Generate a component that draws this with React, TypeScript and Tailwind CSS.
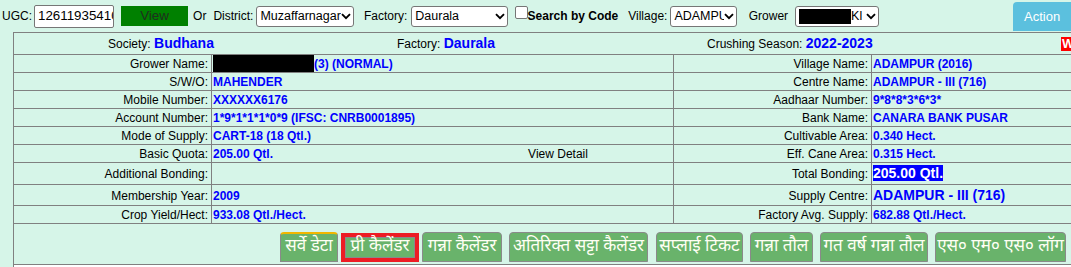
import React from "react";

const Chevron = () => (
  <svg width="10" height="7" viewBox="0 0 10 7" className="shrink-0">
    <path d="M1 1.2 L5 5.2 L9 1.2" fill="none" stroke="#000" strokeWidth="1.9" />
  </svg>
);

function FakeSelect({ w, ml, children }: { w: string; ml: string; children: React.ReactNode }) {
  return (
    <div
      className={`${w} ${ml} h-[21px] flex items-center justify-between border border-[#767676] rounded-[3px] bg-white pl-[3px] pr-[2px] text-[12.5px] text-black overflow-hidden whitespace-nowrap`}
    >
      <div className="min-w-0 overflow-hidden flex items-center">{children}</div>
      <Chevron />
    </div>
  );
}

const lbl = "border border-[#808080] text-right pr-[3px] pt-[2px] pb-[1px] text-[12px] leading-[14px] text-black whitespace-nowrap";
const val = "border border-[#808080] text-left pl-[1px] pt-[2px] pb-[1px] text-[12px] leading-[14px] font-bold text-[#0000ff] whitespace-nowrap";

const btn = "h-[30px] flex items-center justify-center border border-[#8a8a8a] rounded-t-[4px] bg-[#69b36b] text-[#fffff4] text-[17px] leading-none whitespace-nowrap";

export default function App() {
  return (
    <div className="w-[1071px] h-[267px] overflow-hidden bg-[#d6f5e8] font-['Liberation_Sans',Arial,sans-serif]">
      {/* Top filter bar */}
      <div className="h-[32px] flex items-center text-[12px] text-black whitespace-nowrap">
        <span className="ml-[2px]">UGC:</span>
        <div className="ml-[2px] w-[82px] h-[23px] flex items-center border border-[#767676] rounded-[2px] bg-white pl-[3px] text-[13.33px] overflow-hidden">
          12611935410
        </div>
        <div className="ml-[7px] w-[69px] h-[20px] flex items-center justify-center bg-[#008000] text-[13.33px] text-[#1f2f1f]">
          View
        </div>
        <span className="ml-[5px]">Or</span>
        <span className="ml-[7px]">District:</span>
        <FakeSelect w="w-[100px]" ml="ml-[3px]">Muzaffarnagar</FakeSelect>
        <span className="ml-[10px]">Factory:</span>
        <FakeSelect w="w-[99px]" ml="ml-[4px]">Daurala</FakeSelect>
        <div className="ml-[7px] self-start mt-[6px] w-[13px] h-[13px] border border-[#767676] rounded-[2px] bg-white" />
        <span className="font-bold">Search by Code</span>
        <span className="ml-[10px]">Village:</span>
        <FakeSelect w="w-[68px]" ml="ml-[3px]">ADAMPUR</FakeSelect>
        <span className="ml-[12px]">Grower</span>
        <FakeSelect w="w-[86px]" ml="ml-[7px]">
          <span className="inline-block shrink-0 w-[52px] h-[15px] bg-black" />
          <span>Kl</span>
        </FakeSelect>
        <div className="ml-[134px] self-start mt-[2px] w-[58px] h-[29px] shrink-0 flex items-center pl-[11px] bg-[#5bc0de] rounded-tl-[4px] text-white text-[13px]">
          Action
        </div>
      </div>

      {/* Main table */}
      <div className="ml-[13px] w-[1120px]">
        <table className="border-collapse table-fixed w-[1120px]">
          <colgroup>
            <col className="w-[198px]" />
            <col className="w-[462px]" />
            <col className="w-[198px]" />
            <col className="w-[262px]" />
          </colgroup>
          <tbody>
            <tr>
              <td colSpan={4} className="border border-[#808080] pt-[2px] pb-[1px] text-[12px] leading-[17px] text-black whitespace-nowrap">
                <div className="flex items-center">
                  <div className="w-[383px] pl-[94px]">
                    Society: <span className="text-[14px] font-bold text-[#0000ff]">Budhana</span>
                  </div>
                  <div className="w-[310px]">
                    Factory: <span className="text-[14px] font-bold text-[#0000ff]">Daurala</span>
                  </div>
                  <div className="w-[354px]">
                    Crushing Season: <span className="text-[14px] font-bold text-[#0000ff]">2022-2023</span>
                  </div>
                  <div className="h-[14px] w-[30px] bg-[#ff0000] text-white font-bold text-[13px] leading-[14px] pl-[1px] overflow-hidden">
                    WEB
                  </div>
                </div>
              </td>
            </tr>
            <tr>
              <td className={lbl}>Grower Name:</td>
              <td className={val}>
                <span className="inline-block align-top w-[101px] h-[17px] -mt-[2px] -mb-[1px] bg-black" />
                (3) (NORMAL)
              </td>
              <td className={lbl}>Village Name:</td>
              <td className={val}>ADAMPUR (2016)</td>
            </tr>
            <tr>
              <td className={lbl}>S/W/O:</td>
              <td className={val}>MAHENDER</td>
              <td className={lbl}>Centre Name:</td>
              <td className={val}>ADAMPUR - III (716)</td>
            </tr>
            <tr>
              <td className={lbl}>Mobile Number:</td>
              <td className={val}>XXXXXX6176</td>
              <td className={lbl}>Aadhaar Number:</td>
              <td className={val}>9*8*8*3*6*3*</td>
            </tr>
            <tr>
              <td className={lbl}>Account Number:</td>
              <td className={val}>1*9*1*1*1*0*9 (IFSC: CNRB0001895)</td>
              <td className={lbl}>Bank Name:</td>
              <td className={val}>CANARA BANK PUSAR</td>
            </tr>
            <tr>
              <td className={lbl}>Mode of Supply:</td>
              <td className={val}>CART-18 (18 Qtl.)</td>
              <td className={lbl}>Cultivable Area:</td>
              <td className={val}>0.340 Hect.</td>
            </tr>
            <tr>
              <td className={lbl}>Basic Quota:</td>
              <td className={val}>
                <div className="flex">
                  <div className="w-1/2">205.00 Qtl.</div>
                  <div className="w-1/2 text-center font-normal text-black">View Detail</div>
                </div>
              </td>
              <td className={lbl}>Eff. Cane Area:</td>
              <td className={val}>0.315 Hect.</td>
            </tr>
            <tr>
              <td className={lbl}>Additional Bonding:</td>
              <td className={val}></td>
              <td className={lbl}>Total Bonding:</td>
              <td className={`${val} leading-[17px]`}>
                <span className="inline-block bg-[#0000ff] text-white text-[14px] leading-[16px]">205.00 Qtl.</span>
              </td>
            </tr>
            <tr>
              <td className={lbl}>Membership Year:</td>
              <td className={val}>2009</td>
              <td className={lbl}>Supply Centre:</td>
              <td className={`${val} text-[14px] leading-[17px]`}>ADAMPUR - III (716)</td>
            </tr>
            <tr>
              <td className={lbl}>Crop Yield/Hect:</td>
              <td className={val}>933.08 Qtl./Hect.</td>
              <td className={lbl}>Factory Avg. Supply:</td>
              <td className={val}>682.88 Qtl./Hect.</td>
            </tr>
            <tr>
              <td colSpan={4} className="border border-[#808080] pt-[8px] pb-[2px]">
                <div className="flex items-start font-['Noto_Sans_Devanagari','Lohit_Devanagari','Nirmala_UI',Mangal,'Noto_Sans',sans-serif]">
                  <div className={`${btn} ml-[266px] w-[58px] border-t-[2px] border-t-[#f2b600]`}>सर्वे डेटा</div>
                  <div className="ml-[3px] mt-[1px] w-[78px] h-[29px] border-[4px] border-[#ed1c24] flex">
                    <div className="flex-1 flex items-center justify-center border border-[#8a8a8a] bg-[#69b36b] text-[#fffff4] text-[17px] leading-none whitespace-nowrap">
                      प्री कैलेंडर
                    </div>
                  </div>
                  <div className={`${btn} ml-[3px] w-[80px]`}>गन्ना कैलेंडर</div>
                  <div className={`${btn} ml-[7px] w-[139px]`}>अतिरिक्त सट्टा कैलेंडर</div>
                  <div className={`${btn} ml-[8px] w-[87px]`}>सप्लाई टिकट</div>
                  <div className={`${btn} ml-[7px] w-[63px]`}>गन्ना तौल</div>
                  <div className={`${btn} ml-[7px] w-[108px]`}>गत वर्ष गन्ना तौल</div>
                  <div className={`${btn} ml-[7px] w-[131px]`}>एस० एम० एस० लॉग</div>
                </div>
              </td>
            </tr>
          </tbody>
        </table>
        <div className="h-[20px] border-l border-[#808080] bg-white" />
      </div>
    </div>
  );
}
